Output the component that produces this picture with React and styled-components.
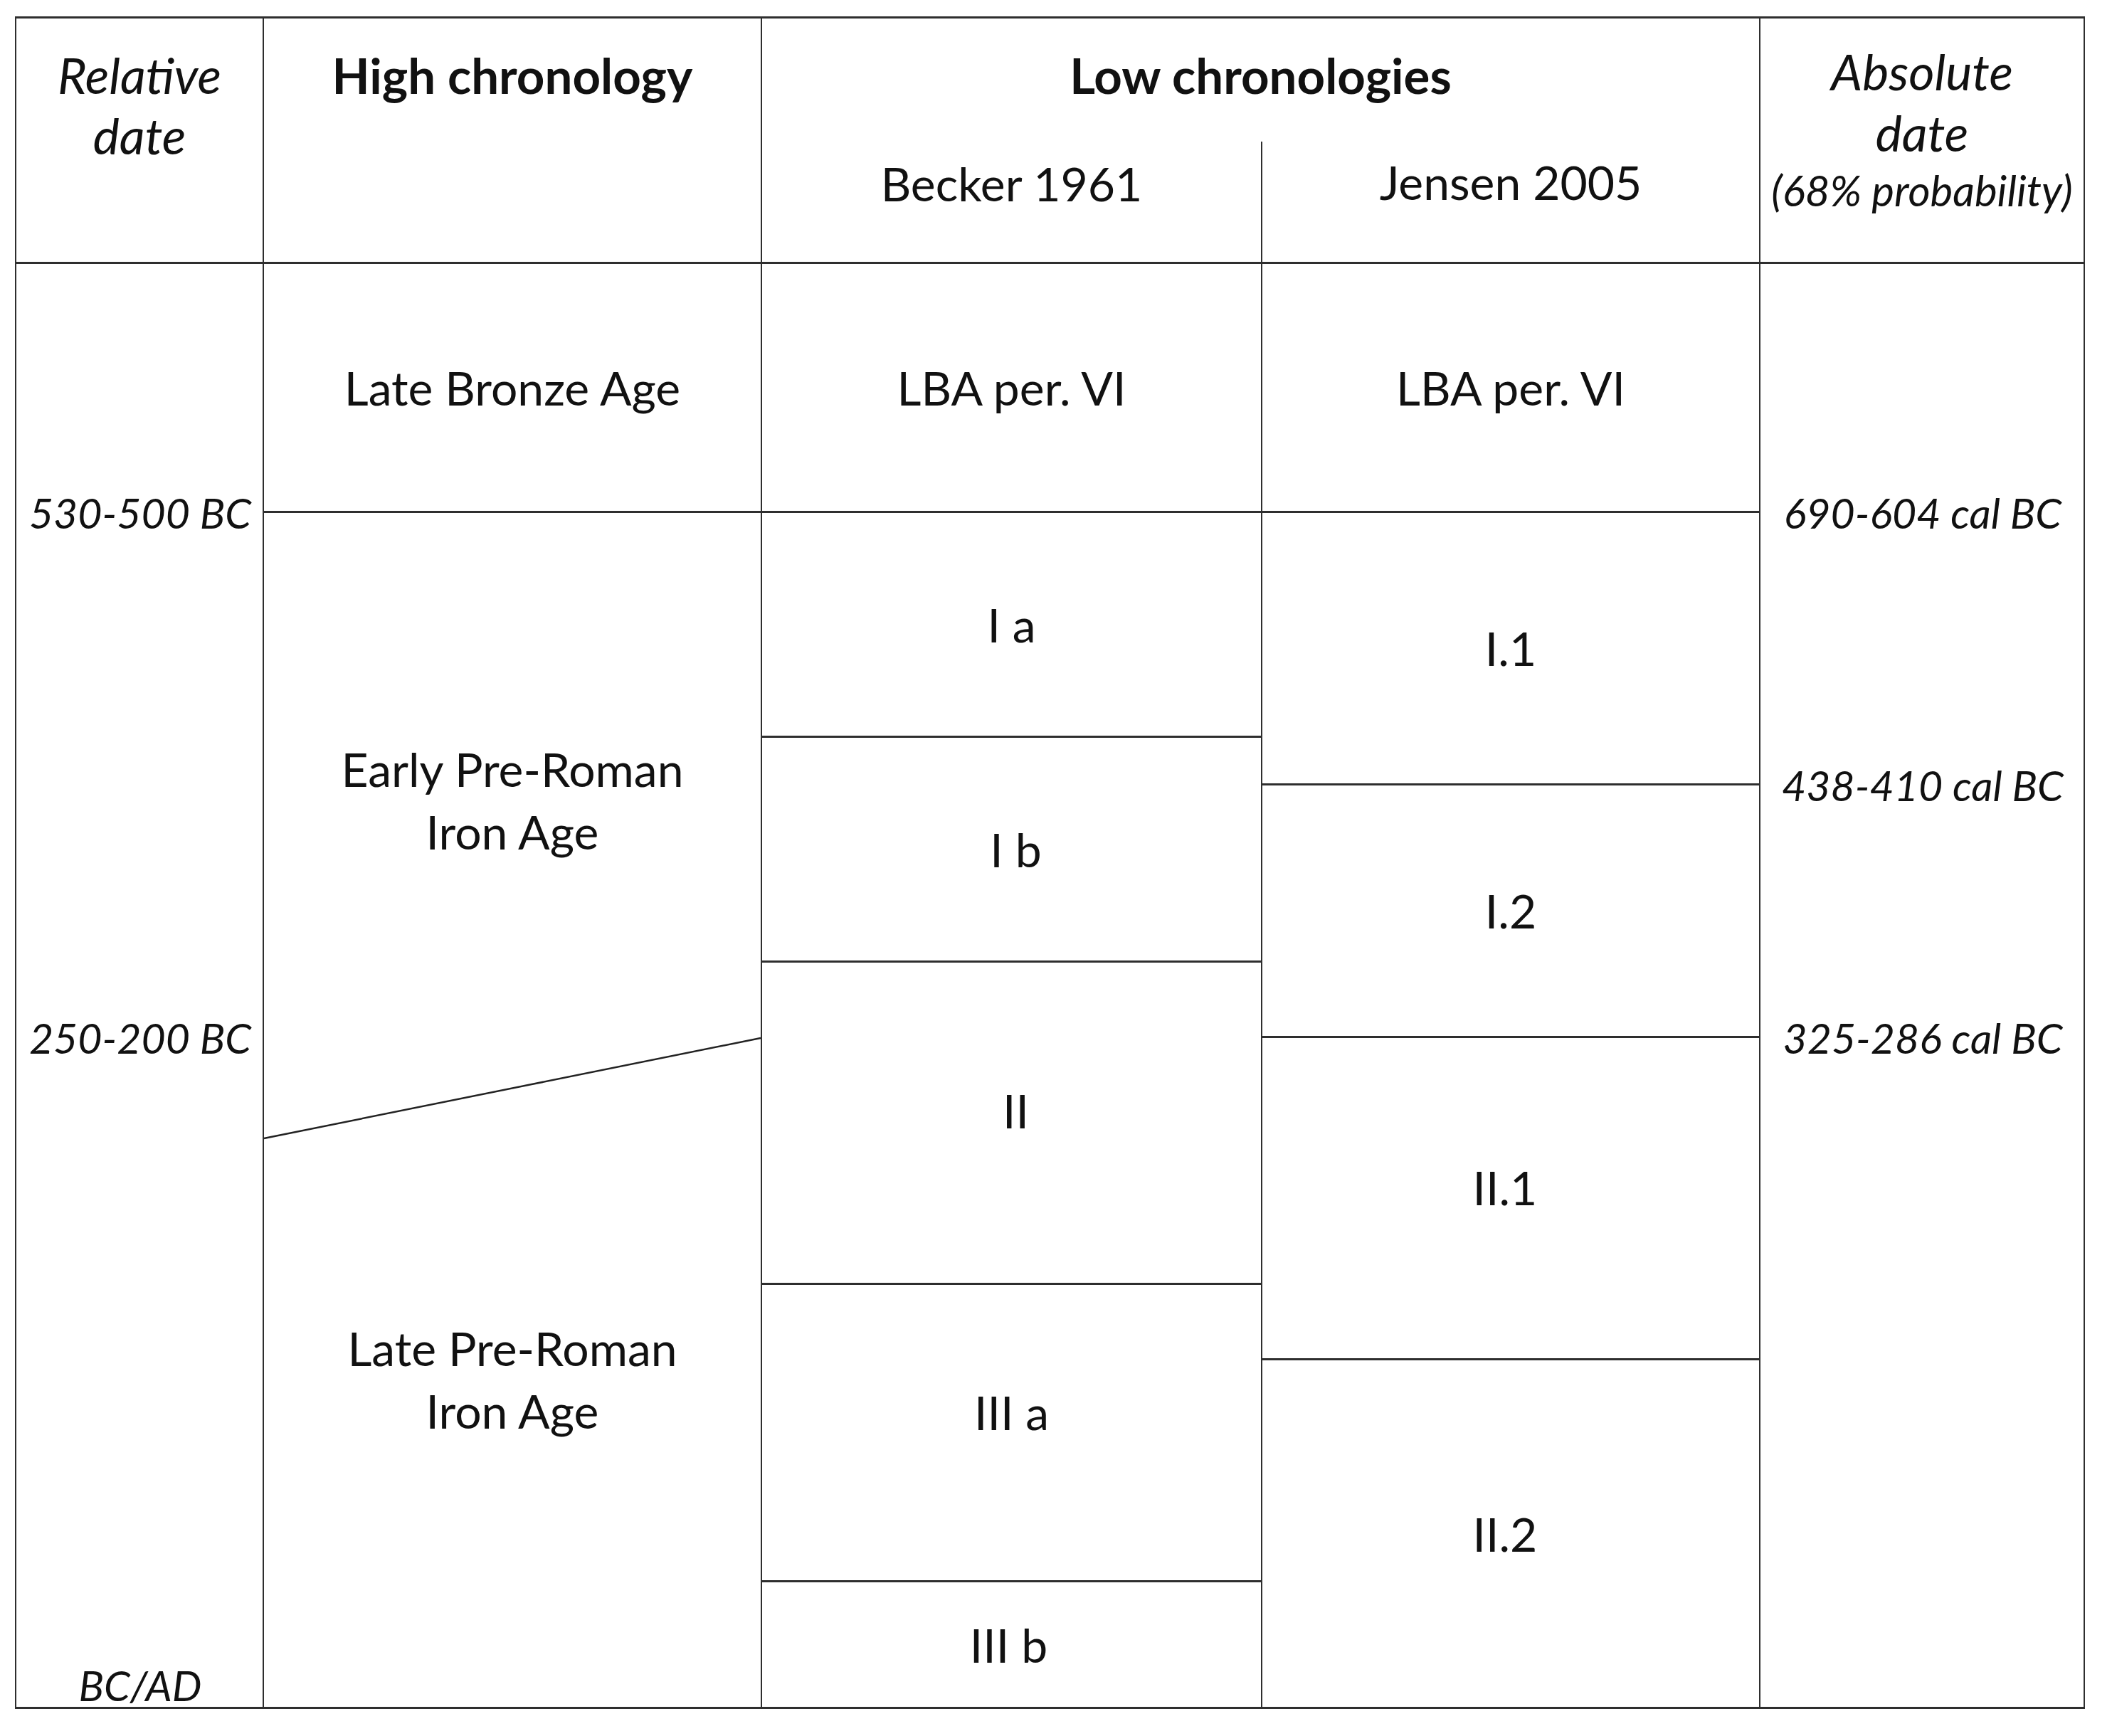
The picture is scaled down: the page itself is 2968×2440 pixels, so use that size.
import React from "react";
import styled, { createGlobalStyle } from "styled-components";

const LINE = "#2e2e2e";
const INK = "#111";

const Global = createGlobalStyle`
  html, body { margin: 0; padding: 0; background: #fff; }
  body { font-family: Lato, "Open Sans", sans-serif; color: ${INK}; }
`;

const Table = styled.div`
  display: grid;
  grid-template-columns: 348px 700px 703px 700px 456px;
  grid-template-rows: 173px 172px 350px 316px 67px 249px 106px 347px 106px 312px 178px;
  width: fit-content;
  margin: 23px 0 0 21px;
  border-top: 3px solid ${LINE};
  border-left: 2px solid ${LINE};
`;

const Cell = styled.div`
  grid-column: ${(p) => p.$col};
  grid-row: ${(p) => p.$row};
  box-sizing: border-box;
  position: relative;
  border-right: 2px solid ${LINE};
  border-bottom: ${(p) => (p.$open ? "none" : `3px solid ${LINE}`)};
  display: flex;
  flex-direction: column;
  align-items: center;
  justify-content: ${(p) => (p.$top ? "flex-start" : "center")};
  padding-top: ${(p) => p.$pt || 0}px;
  padding-bottom: ${(p) => p.$pb || 0}px;
  text-align: center;
`;

const HeadText = styled.div`
  font-size: ${(p) => (p.$bold ? 69 : p.$italic ? 70 : 66)}px;
  line-height: ${(p) => p.$lh || 85}px;
  font-weight: ${(p) => (p.$bold ? 700 : 400)};
  font-style: ${(p) => (p.$italic ? "italic" : "normal")};
  white-space: nowrap;
`;

const SmallNote = styled.div`
  font-size: 60px;
  line-height: 76px;
  font-style: italic;
  white-space: nowrap;
`;

const Period = styled.div`
  font-size: 66px;
  line-height: ${(p) => p.$lh || 88}px;
  white-space: nowrap;
  transform: translateX(${(p) => p.$dx || 0}px);
`;

const Mark = styled.div`
  grid-column: ${(p) => p.$col};
  grid-row: ${(p) => p.$row};
  align-self: ${(p) => (p.$end ? "end" : "start")};
  justify-self: center;
  transform: translateY(${(p) => (p.$end ? "0" : "-50%")});
  font-size: 59px;
  line-height: ${(p) => (p.$end ? 66 : 80)}px;
  font-style: italic;
  white-space: nowrap;
  z-index: 2;
`;

const Stack = styled.div`
  flex: ${(p) => (p.$h ? `0 0 ${p.$h}px` : "1 1 auto")};
  display: flex;
  flex-direction: column;
  align-items: center;
  justify-content: center;
  padding-bottom: ${(p) => p.$pb || 0}px;
  box-sizing: border-box;
  width: 100%;
`;

const Diagonal = styled.svg`
  position: absolute;
  inset: 0;
  width: 100%;
  height: 100%;
  overflow: visible;
  pointer-events: none;
`;

export default function App() {
  return (
    <>
      <Global />
      <Table>
        {/* header */}
        <Cell $col="1" $row="1 / 3" $top $pt={37}>
          <HeadText $italic>Relative</HeadText>
          <HeadText $italic>date</HeadText>
        </Cell>
        <Cell $col="2" $row="1 / 3" $top $pt={37}>
          <HeadText $bold>High chronology</HeadText>
        </Cell>
        <Cell $col="3 / 5" $row="1" $top $pt={37} $open>
          <HeadText $bold>Low chronologies</HeadText>
        </Cell>
        <Cell $col="3" $row="2" $top $pt={16}>
          <HeadText>Becker 1961</HeadText>
        </Cell>
        <Cell $col="4" $row="2" $top $pt={14}>
          <HeadText>Jensen 2005</HeadText>
        </Cell>
        <Cell $col="5" $row="1 / 3" $top $pt={31}>
          <HeadText $italic $lh={86}>Absolute</HeadText>
          <HeadText $italic $lh={86}>date</HeadText>
          <SmallNote>(68% probability)</SmallNote>
        </Cell>

        {/* relative date axis */}
        <Cell $col="1" $row="3 / 12" />

        {/* high chronology */}
        <Cell $col="2" $row="3">
          <Period>Late Bronze Age</Period>
        </Cell>
        <Cell $col="2" $row="4 / 12" $top>
          <Stack $h={808}>
            <Period>Early Pre-Roman</Period>
            <Period>Iron Age</Period>
          </Stack>
          <Stack $pb={50}>
            <Period>Late Pre-Roman</Period>
            <Period>Iron Age</Period>
          </Stack>
          <Diagonal>
            <line x1="0" y1="879" x2="100%" y2="738" stroke="#222" strokeWidth="2.5" />
          </Diagonal>
        </Cell>

        {/* Becker 1961 */}
        <Cell $col="3" $row="3">
          <Period>LBA per. VI</Period>
        </Cell>
        <Cell $col="3" $row="4">
          <Period>I a</Period>
        </Cell>
        <Cell $col="3" $row="5 / 7">
          <Period $dx={6}>I b</Period>
        </Cell>
        <Cell $col="3" $row="7 / 9" $pb={34}>
          <Period $dx={6}>II</Period>
        </Cell>
        <Cell $col="3" $row="9 / 11" $pb={58}>
          <Period>III a</Period>
        </Cell>
        <Cell $col="3" $row="11">
          <Period $dx={-4}>III b</Period>
        </Cell>

        {/* Jensen 2005 */}
        <Cell $col="4" $row="3">
          <Period>LBA per. VI</Period>
        </Cell>
        <Cell $col="4" $row="4 / 6">
          <Period>I.1</Period>
        </Cell>
        <Cell $col="4" $row="6 / 8">
          <Period>I.2</Period>
        </Cell>
        <Cell $col="4" $row="8 / 10" $pb={30}>
          <Period $dx={-8}>II.1</Period>
        </Cell>
        <Cell $col="4" $row="10 / 12">
          <Period $dx={-8}>II.2</Period>
        </Cell>

        {/* absolute date */}
        <Cell $col="5" $row="3 / 12" />

        <Mark $col="1" $row="4">530-500 BC</Mark>
        <Mark $col="1" $row="8">250-200 BC</Mark>
        <Mark $col="1" $row="11" $end>BC/AD</Mark>
        <Mark $col="5" $row="4">690-604 cal BC</Mark>
        <Mark $col="5" $row="6">438-410 cal BC</Mark>
        <Mark $col="5" $row="8">325-286 cal BC</Mark>
      </Table>
    </>
  );
}
